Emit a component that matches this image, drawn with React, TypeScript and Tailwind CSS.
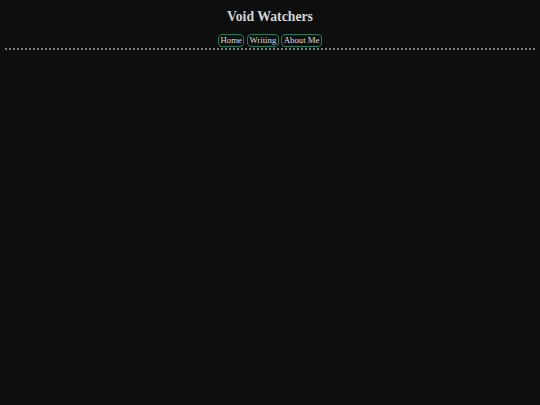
import React from "react";

export default function App() {
  const links = ["Home", "Writing", "About Me"];
  return (
    <div className="min-h-screen w-full bg-[#0e0e0e] text-[#d0d0d0]" style={{ fontFamily: '"Liberation Serif", serif' }}>
      <div className="px-[5px] pt-[9px]">
        <h1 className="text-center text-[13.75px] font-bold leading-[16px] text-[#d4d4d4]">Void Watchers</h1>
        <nav className="mt-[9px] mb-[1px] flex justify-center gap-[2.5px]">
          {links.map((l) => (
            <a key={l} className="rounded-[4px] border border-[#1b7d5d] px-[1.5px] text-[8.75px] leading-[11px] text-[#dcdcdc]">
              {l}
            </a>
          ))}
        </nav>
        <div className="border-b-2 border-dotted border-[#7a7a7a]" />
      </div>
    </div>
  );
}
